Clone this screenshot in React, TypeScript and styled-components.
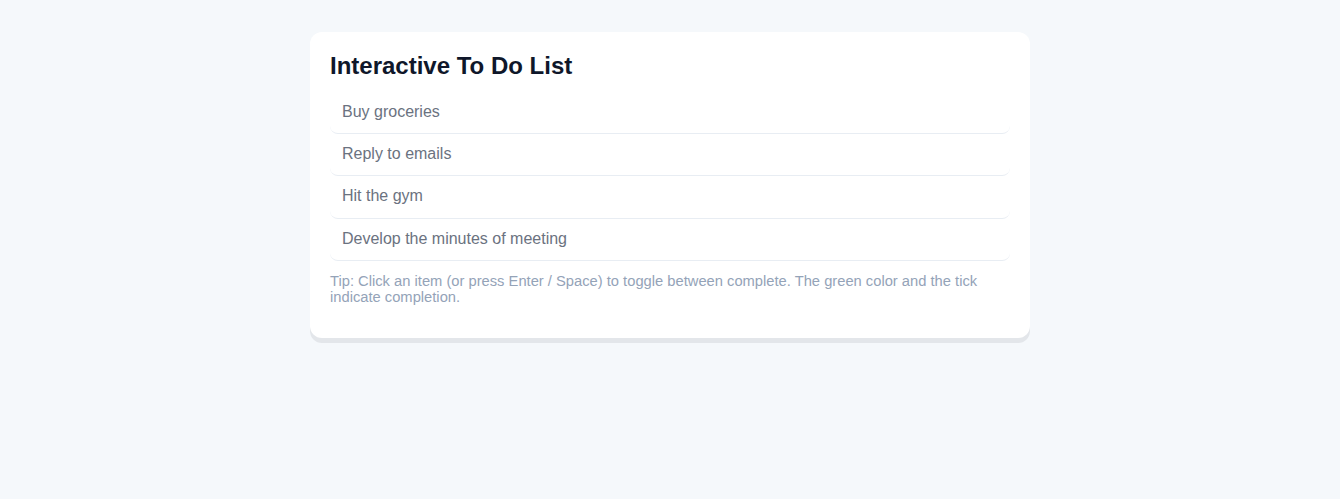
import React, { useState } from "react";
import styled, { createGlobalStyle } from "styled-components";

const GlobalStyle = createGlobalStyle`
  html, body {
    margin: 0;
    padding: 0;
    background: #f5f8fb;
    font-family: "Liberation Sans", Arial, sans-serif;
  }
`;

const Page = styled.div`
  min-height: 499px;
  padding-top: 32px;
  display: flex;
  justify-content: center;
  align-items: flex-start;
  box-sizing: border-box;
`;

const Card = styled.div`
  width: 720px;
  box-sizing: border-box;
  background: #ffffff;
  border-radius: 12px;
  padding: 20px;
  box-shadow: 0 5px 0 rgba(20, 20, 40, 0.08);
`;

const Title = styled.h1`
  margin: 0 0 12px;
  font-size: 24px;
  line-height: 28px;
  font-weight: 700;
  color: #0f172a;
`;

const List = styled.ul`
  list-style: none;
  margin: 0;
  padding: 0;
`;

const Item = styled.li<{ $done: boolean }>`
  padding: 10px 12px 12px;
  font-size: 16px;
  line-height: 19.2px;
  color: ${(p) => (p.$done ? "#16a34a" : "#6b7280")};
  border-bottom: 1px solid #e8edf3;
  border-radius: 8px;
  cursor: pointer;
  user-select: none;
  outline: none;
`;

const Tip = styled.p`
  margin: 12px 0 13px;
  font-size: 14.72px;
  line-height: 16px;
  color: #94a3b8;
`;

const initial = [
  "Buy groceries",
  "Reply to emails",
  "Hit the gym",
  "Develop the minutes of meeting",
];

export default function App() {
  const [done, setDone] = useState<boolean[]>(initial.map(() => false));
  const toggle = (i: number) =>
    setDone((d) => d.map((v, j) => (j === i ? !v : v)));
  return (
    <>
      <GlobalStyle />
      <Page>
        <Card>
          <Title>Interactive To Do List</Title>
          <List>
            {initial.map((t, i) => (
              <Item
                key={t}
                $done={done[i]}
                tabIndex={0}
                role="checkbox"
                aria-checked={done[i]}
                onClick={() => toggle(i)}
                onKeyDown={(e) => {
                  if (e.key === "Enter" || e.key === " ") {
                    e.preventDefault();
                    toggle(i);
                  }
                }}
              >
                {done[i] ? "✓ " : ""}
                {t}
              </Item>
            ))}
          </List>
          <Tip>
            Tip: Click an item (or press Enter / Space) to toggle between
            complete. The green color and the tick indicate completion.
          </Tip>
        </Card>
      </Page>
    </>
  );
}
